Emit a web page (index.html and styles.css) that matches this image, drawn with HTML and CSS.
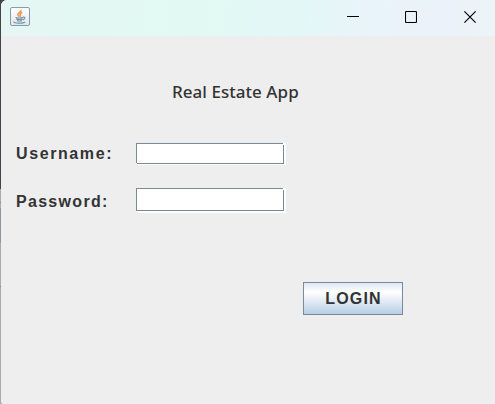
FILE: index.html
```html
<!DOCTYPE html>
<html lang="en">
<head>
<meta charset="utf-8">
<title>Real Estate App</title>
<link rel="stylesheet" href="styles.css">
</head>
<body>
<div class="window">
  <header class="titlebar">
    <svg class="app-icon" width="20" height="19" viewBox="0 0 20 19">
      <defs><linearGradient id="g" x1="0" y1="0" x2="0" y2="1"><stop offset="0" stop-color="#fff"/><stop offset="1" stop-color="#e3e5e8"/></linearGradient></defs>
      <rect x=".5" y=".5" width="19" height="18" rx="1.5" fill="url(#g)" stroke="#849dad"/>
      <path d="M11 3C12 5 7.500 5.500 7.800 7.500C8 8.500 9 9 9.300 9.700M12.200 5.500C10 6.200 9.500 7.200 10.300 8.100Q11 9 10.300 9.700" fill="none" stroke="#ef9850" stroke-width="1.500"/>
      <path d="M5.500 10.500Q9.500 11.500 13 10.500M6 12Q9.500 13 12.500 12M7 13.700Q9.500 14.300 12 13.600M13 10.200C15.700 9.700 15 12.300 12.700 12.800M4 14.500C3 16.700 13.500 16.600 15 14.800" fill="none" stroke="#7296ad" stroke-width="1.200"/>
    </svg>
    <div class="controls">
      <svg width="12" height="12"><path d="M0 5.500H12" stroke="#000"/></svg>
      <svg width="12" height="12"><rect x=".5" y=".5" width="11" height="11" rx="1" fill="none" stroke="#000" stroke-width="1.100"/></svg>
      <svg class="close" width="12" height="12"><path d="M.4 .4L11.600 11.600M11.600 .4L.4 11.600" stroke="#000" stroke-width="1.150"/></svg>
    </div>
  </header>
  <main class="content">
    <h1 class="heading">Real Estate App</h1>
    <form class="form">
      <label class="label" for="user">Username:</label>
      <div class="field field-user"><input id="user" type="text"></div>
      <label class="label label-pass" for="pass">Password:</label>
      <div class="field field-pass"><input id="pass" type="password"></div>
      <button class="login" type="button">LOGIN</button>
    </form>
  </main>
</div>
</body>
</html>
```
FILE: styles.css
```css
* { box-sizing: border-box; }
body {
  margin: 0;
  height: 404px;
  padding-left: 1px;
  overflow: hidden;
  background: linear-gradient(#454349 0 189px, #aaa 189px 202px, #888 202px 203px, #aaa 203px 208px, #8d979e 208px 243px, #aaa 243px 286px, #888 286px 287px, #aaa 287px);
}
.window {
  height: 404px;
  background: #eee;
  border-radius: 6px 0 0 2px;
  overflow: hidden;
}
.titlebar {
  height: 36px;
  display: flex;
  justify-content: space-between;
  padding: 7px 19px 0 9px;
  background: linear-gradient(100deg, #e5f7f2 0, #e2f9f3 40%, #e3f7f7 60%, #e9f4fa 74%, #ebf2fa 88%, #ebf4f7 100%);
}
.controls {
  display: flex;
  gap: 46px;
  padding-top: 4px;
}
.controls svg, .app-icon { display: block; }
.controls .close { margin-left: 1px; }
.heading {
  margin: 0;
  padding: 44px 0 0 171px;
  font: 500 17px/24px "Noto Sans", sans-serif;
  letter-spacing: .04px;
  color: #333;
  white-space: nowrap;
}
.form {
  display: grid;
  grid-template-columns: 120px 150px 117px;
  grid-template-rows: 22px 25px auto;
  row-gap: 23px;
  padding: 39px 0 0 15px;
}
.label {
  grid-column: 1;
  font: bold 16px/21px "Liberation Sans", sans-serif;
  letter-spacing: 1.6px;
  color: #333;
}
.label-pass { line-height: 27px; letter-spacing: 1.3px; }
.field {
  grid-column: 2;
  position: relative;
  background: #fff;
  border-top: 1px solid #7a8a99;
  border-left: 1px solid #7a8a99;
  clip-path: polygon(0 0, 100% 0, 100% 100%, 1px 100%, 1px calc(100% - 2px), 0 calc(100% - 2px));
}
.field::before {
  content: "";
  position: absolute;
  top: -1px;
  right: 0;
  width: 3px;
  height: 1px;
  background: #fff;
}
.field input {
  display: block;
  width: 147px;
  height: 20px;
  padding: 0 3px;
  border: solid #7a8a99;
  border-width: 0 1px 1px 0;
  outline: 0;
  background: #fff;
}
.field-pass input { height: 22px; }
.field::after {
  content: "";
  position: absolute;
  top: 0;
  right: 2px;
  width: 1px;
  height: 1px;
  background: #fff;
}
.login {
  grid-area: 3 / 3;
  justify-self: end;
  width: 100px;
  height: 33px;
  margin-top: 46px;
  padding: 0 0 0 1px;
  border: 1px solid #7a8a99;
  background: linear-gradient(#dde8f3, #fff 30%, #b8cfe5);
  color: #333;
  font: bold 16px/31px "Liberation Sans", sans-serif;
  letter-spacing: 1.2px;
}
```
